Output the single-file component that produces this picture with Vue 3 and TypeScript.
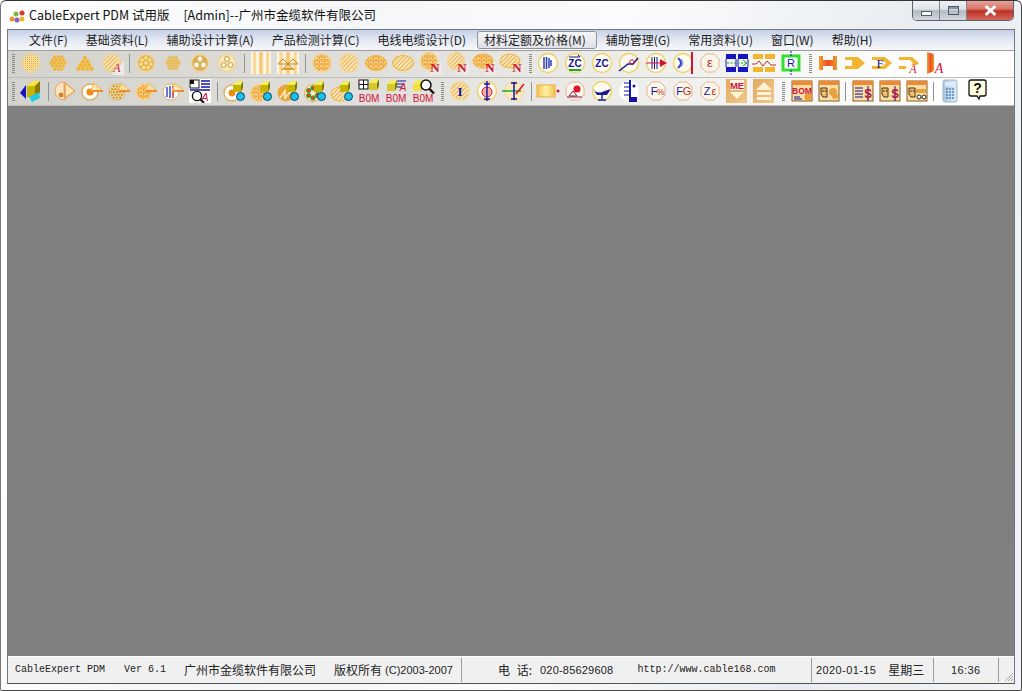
<script setup lang="ts">
const menus = ['文件(F)', '基础资料(L)', '辅助设计计算(A)', '产品检测计算(C)', '电线电缆设计(D)', '材料定额及价格(M)', '辅助管理(G)', '常用资料(U)', '窗口(W)', '帮助(H)']
const activeMenu = '材料定额及价格(M)'

const GOLD = '#f4b52e'
const EDGE = '#f2d592'
const RED = '#d3123c'
const BLUE = '#14149c'

const text = (x: number, y: number, s: string, size = 10, fill = BLUE, extra = '') =>
  `<text x="${x}" y="${y}" font-size="${size}" fill="${fill}" font-family="Liberation Sans, sans-serif" text-anchor="middle" ${extra}>${s}</text>`
const serifA = (x = 17, y = 21, size = 12) => text(x, y, 'A', size, RED, 'font-style="italic" style="font-family:Liberation Serif,serif"')
const letterN = (x = 17, y = 21) => text(x, y, 'N', 13, RED, 'font-weight="700" style="font-family:Liberation Serif,serif"')
const disc = (fill: string, r = 9, cx = 12, cy = 12) => `<circle cx="${cx}" cy="${cy}" r="${r}" fill="${fill}" stroke="${EDGE}" stroke-width="1.5"/>`
const oval = (fill: string, cx = 12, cy = 12, rx = 10.5, ry = 7.5) => `<ellipse cx="${cx}" cy="${cy}" rx="${rx}" ry="${ry}" fill="${fill}" stroke="${GOLD}" stroke-width="1"/>`
const wedge = `<polygon points="11,24 24,24 24,10" fill="#ecebe6"/>`

function cluster(cx: number, cy: number, r: number, step: number, dot: number, fill = GOLD) {
  let out = ''
  for (let row = -4; row <= 4; row++) {
    for (let col = -4; col <= 4; col++) {
      const x = (col + (row % 2 ? 0.5 : 0)) * step
      const y = row * step * 0.87
      if (x * x + y * y <= r * r) out += `<circle cx="${cx + x}" cy="${cy + y}" r="${dot}" fill="${fill}"/>`
    }
  }
  return out
}

function ringDots(n: number, cx: number, cy: number, r: number, dot: number, fill: string, stroke = 'none') {
  let out = ''
  for (let i = 0; i < n; i++) {
    const a = (i / n) * Math.PI * 2 - Math.PI / 2
    out += `<circle cx="${cx + r * Math.cos(a)}" cy="${cy + r * Math.sin(a)}" r="${dot}" fill="${fill}" stroke="${stroke}"/>`
  }
  return out
}

const pile = () => {
  let out = ''
  for (let row = 0; row < 4; row++) {
    for (let i = 0; i <= row; i++) out += `<circle cx="${12 + (i - row / 2) * 4.4}" cy="${7 + row * 3.6}" r="2.1" fill="${GOLD}"/>`
  }
  return out
}

const yellowRing = (inner: string) => `<circle cx="12" cy="12" r="9.5" fill="#fdfbf0" stroke="#eed264" stroke-width="1.4"/>${inner}`
const brownRing = (inner: string) => `<polygon points="8,3 16,3 21,8 21,16 16,21 8,21 3,16 3,8" fill="#fdf6ea" stroke="#e6b48c"/>${inner}`
const triangle = (inner: string) => `${inner}<polygon points="11,12 23,12 14,4" fill="#fbe6b4" fill-opacity=".75" stroke="${GOLD}"/><line x1="12" y1="12" x2="23" y2="12" stroke="#ec7a1c" stroke-width="1.4"/>`
const box3d = (x = 11, y = 2, c = '#c8b400') => `<polygon points="${x},${y + 4} ${x + 4},${y} ${x + 10},${y} ${x + 8},${y + 4}" fill="#f4ec60"/><rect x="${x}" y="${y + 4}" width="8" height="7" fill="${c}"/><polygon points="${x + 8},${y + 4} ${x + 10},${y} ${x + 10},${y + 7} ${x + 8},${y + 11}" fill="#7c7a08"/>`
const cyan = `<circle cx="18.5" cy="17.5" r="4" fill="#18c4e4" stroke="#0c3c80"/>`
const bomText = text(12, 23, 'B0M', 10, RED)
const doc = (inner: string) => `<rect x="3" y="2" width="20" height="20" fill="#f6dfa8" stroke="#8c5a1c"/><rect x="3" y="2" width="20" height="4" fill="#ee8a34"/>${inner}`
const face = `<path d="M5 9h6v9H7l-2-3z" fill="#f4c070" stroke="#4c2c0c"/><circle cx="7" cy="12" r=".8" fill="#222"/><circle cx="9.5" cy="12" r=".8" fill="#222"/>`
const dollar = `<line x1="18" y1="7" x2="18" y2="22" stroke="${BLUE}"/>${text(18, 19, '$', 13, '#b0183c', 'font-weight="700"')}`
const orangeLink = `<path d="M2 6h13l7 6-7 6H2v-3h11l3-3-3-3H2z" fill="${GOLD}"/>`

const icons: Record<string, string> = {
  fine: disc('url(#fine)', 8.5),
  flower: cluster(12, 12, 7.5, 3.5, 1.7),
  pile: pile(),
  fineA: disc('url(#diag)', 8.5) + wedge + serifA(),
  ring7: disc('#e3b550', 8.5) + ringDots(7, 12, 12, 5, 1.7, '#fbe09c') + `<circle cx="12" cy="12" r="1.7" fill="#fbe09c"/>`,
  small: cluster(12, 12, 6.5, 3.1, 1.5, '#ebb84c'),
  three: disc('#d9ae58', 8.5) + ringDots(3, 12, 12, 4, 2.4, '#fdf4dc'),
  threeO: disc('#fbe9bd', 8.5) + ringDots(3, 12, 12, 4, 2.5, '#fff6de', '#c79a3c'),
  bands: `<rect x="2" y="1" width="20" height="22" fill="url(#bands)"/>`,
  bandsT: `<rect x="1" y="1" width="22" height="22" fill="url(#bands)"/><path d="M2 13l5-5 5 5zM12 13l5-5 5 5zM5 18h14" fill="none" stroke="#c98a1c"/><path d="M12 13l-5 5h10z" fill="none" stroke="#c98a1c"/>`,
  net: disc('url(#net)', 9),
  diag: disc('url(#diag)', 9),
  ovalNet: oval('url(#net)'),
  ovalDiag: oval('url(#diag)'),
  netN: disc('url(#net)', 8.5, 11, 10) + wedge + letterN(),
  diagN: disc('url(#diag)', 8.5, 11, 10) + wedge + letterN(),
  ovalNetN: oval('url(#net)', 11, 10, 10, 7) + wedge + letterN(18),
  ovalDiagN: oval('url(#diag)', 11, 10, 10, 7) + wedge + letterN(18),
  bars: yellowRing(`<path d="M8 6v12M10.5 6v12M13 7v10M15 9v6" stroke="#2a3cc0" stroke-width="1.5"/>`),
  zcArc: yellowRing(`${text(12, 16, 'ZC', 10, BLUE, 'font-weight="700"')}<path d="M6 6h11l-2-2" fill="none" stroke="${BLUE}"/><path d="M6 19h12" stroke="#1ca832" stroke-width="2"/>`),
  zc: yellowRing(text(12, 16, 'ZC', 10, BLUE, 'font-weight="700"')),
  slope: yellowRing(`<path d="M2 20l9-7h5l5-6" fill="none" stroke="${BLUE}" stroke-width="1.5"/><circle cx="15" cy="11" r="2.3" fill="none" stroke="${RED}"/>`),
  ticks: yellowRing(`<path d="M8 6v12M10.5 6v12M13 6v12" stroke="${BLUE}"/><path d="M2 12h17" stroke="${RED}"/><polygon points="16,8 23,12 16,16" fill="${RED}"/>`),
  barRed: yellowRing(`<path d="M7 7q6 5 0 10" fill="none" stroke="#2a3cc0" stroke-width="2"/><path d="M10 8q4 4 0 8" fill="none" stroke="#7c8ce0"/><path d="M21 1v22" stroke="${RED}" stroke-width="2"/>`),
  epsilon: brownRing(text(12, 16, 'ε', 13, '#b8281c')),
  blocks: `<rect x="1" y="3" width="10" height="5" fill="#1414c0"/><rect x="13" y="3" width="10" height="5" fill="#1414c0"/><rect x="1" y="16" width="10" height="5" fill="#1414c0"/><rect x="13" y="16" width="10" height="5" fill="#1414c0"/><path d="M1 8v8M11 8v8M13 8v8M23 8v8" stroke="#1414c0"/><path d="M2 12h19" stroke="#1ca832" stroke-dasharray="2 1.5"/><path d="M18 9l4 3-4 3" fill="none" stroke="#1ca832"/>`,
  zigzag: `<rect x="1" y="3" width="10" height="5" fill="${GOLD}"/><rect x="13" y="3" width="10" height="5" fill="${GOLD}"/><rect x="1" y="16" width="10" height="5" fill="${GOLD}"/><rect x="13" y="16" width="10" height="5" fill="${GOLD}"/><path d="M0 13h4l3-3 4 5 4-5 4 4h5" fill="none" stroke="#c8281c"/>`,
  resistor: `<rect x="4" y="5" width="16" height="14" fill="#fff" stroke="#30e030" stroke-width="3"/><path d="M12 0v5M12 19v5" stroke="${BLUE}" stroke-dasharray="2 1"/>${text(12, 16, 'R', 11, BLUE)}`,
  hbeam: `<path d="M3 5h4v4h10V5h4v14h-4v-4H7v4H3z" fill="url(#heat)"/>`,
  link: orangeLink + `<polygon points="9,9 15,9 18,12 15,15 9,15" fill="${GOLD}"/>`,
  linkF: orangeLink + text(10, 17, 'F', 13, '#28146c', 'style="font-family:Liberation Serif,serif"'),
  linkA: orangeLink + `<rect x="9" y="14" width="14" height="9" fill="#fffef8"/>` + serifA(16, 22),
  stripA: `<path d="M3 1l7 2v17l-7 3z" fill="url(#heat)"/>` + serifA(15, 22, 14),

  cube: `<polygon points="8,7 14,2 21,2 15,7" fill="#ffe23c"/><rect x="8" y="7" width="8" height="11" fill="#c8b400"/><polygon points="16,7 21,2 21,14 16,18" fill="#8a7a00"/><polygon points="10,18 20,13 21,19 13,23" fill="#20c8e0"/><polygon points="1,14 7,6 7,20" fill="#1414c0"/>`,
  halfT: `<path d="M11 3a9 9 0 0 0 0 18z" fill="#fbe3c0" stroke="#e8a86c"/><circle cx="8" cy="16" r="2.4" fill="#c8862c"/><polygon points="12,4 22,12 12,19" fill="#fbe6b4" stroke="#e8872c"/><path d="M12 2v20" stroke="#e8a86c"/>`,
  pieT: triangle(`<circle cx="10" cy="13" r="8" fill="#fff" stroke="#ddb060" stroke-width="1.5"/><circle cx="10" cy="13" r="3.6" fill="#f28a14"/>`),
  dotsT: triangle(`<circle cx="10" cy="13" r="8" fill="#fbe9bd" stroke="#ddb060"/>${cluster(10, 13, 6.5, 3.2, 1.3, '#cf9a3c')}`),
  netT: triangle(disc('url(#net)', 8, 10, 13)),
  barsT: triangle(`<circle cx="10" cy="13" r="8" fill="#fff" stroke="#ddb060"/><path d="M6 8v10M9 7v12" stroke="#2a3cc0" stroke-width="1.4"/><path d="M12 7v12" stroke="${RED}" stroke-width="1.4"/>`),
  report: `<rect x="1" y="0" width="22" height="24" fill="#fff"/><rect x="2" y="1" width="9" height="8" fill="#fff" stroke="#111"/><rect x="2" y="1" width="4" height="4" fill="#111"/><path d="M13 2h9M13 5h9M13 8h9M2 11h20" stroke="${BLUE}" stroke-width="1.4"/><circle cx="9" cy="17" r="4.6" fill="none" stroke="#111" stroke-width="1.4"/>${text(17, 22, 'A', 11, RED, 'font-style="italic"')}<path d="M12 20l4 4" stroke="#111" stroke-width="2"/>`,
  pieBox: `<circle cx="10" cy="14" r="8" fill="#fff" stroke="#ddb060" stroke-width="1.5"/><circle cx="10" cy="14" r="3.4" fill="#f28a14"/>` + box3d() + cyan,
  netBox: disc('url(#net)', 8.5, 10, 14) + box3d() + cyan,
  slashBox: `<circle cx="10" cy="14" r="8.5" fill="#eba63a"/><path d="M4 19l5-7v7l6-7" fill="none" stroke="#fff3c8" stroke-width="1.4"/>` + box3d() + cyan,
  colorBox: `<circle cx="10" cy="14" r="8.5" fill="#fbe9bd" stroke="#ddb060"/>` + ringDots(6, 10, 14, 5, 2.1, '#ec3c1c', '#18a030') + box3d() + cyan,
  ovalBox: oval('url(#diag)', 10, 15, 9, 7) + box3d(10) + cyan,
  bomA: `<rect x="2" y="1" width="9" height="9" fill="#fff" stroke="#111"/><path d="M6.5 1v9M2 5.5h9" stroke="#111"/>` + box3d(12, 0, '#d8c82c') + bomText,
  bomB: box3d(3, 1, '#d8c82c') + `<path d="M13 2h9M13 5h7M13 8h5" stroke="${BLUE}"/>` + text(19, 12, 'A', 10, RED, 'font-style="italic"') + bomText,
  bomC: box3d(2, 1, '#f0e040') + `<circle cx="15" cy="6" r="5" fill="#fff" stroke="#111" stroke-width="1.5"/><path d="M18.5 10l4.5 4.5" stroke="#111" stroke-width="2.4"/>` + bomText,
  iNet: disc('url(#diag)', 9) + text(12, 16.5, 'I', 13, BLUE, 'font-weight="700" style="font-family:Liberation Serif,serif"'),
  iRed: yellowRing(`<circle cx="12" cy="13" r="5" fill="#f8b0a0" stroke="${RED}"/><path d="M12 2v20M9 5h6M9 20h6" stroke="${BLUE}" stroke-width="1.4"/>`),
  iGreen: `<circle cx="12" cy="12" r="9.5" fill="#fbe9bd" stroke="${EDGE}"/><path d="M0 12h19" stroke="#1ca832" stroke-width="1.4"/><path d="M12 3v18M9 4h6M9 20h6" stroke="${BLUE}" stroke-width="1.5"/><path d="M14 15l8-10" stroke="${RED}" stroke-width="1.5"/>`,
  lamp: `<rect x="1" y="6" width="18" height="12" fill="url(#lamp)" stroke="#e8b040"/><circle cx="22" cy="12" r="1.5" fill="${RED}"/>`,
  redDot: brownRing(`<circle cx="14" cy="10" r="3.5" fill="#e0142c"/><path d="M6 17l4-5 4 5z" fill="none" stroke="#8c1c4c"/><path d="M4 18h15" stroke="#8c1c4c"/>`),
  scale: yellowRing(`<path d="M3 10q4 5 9 3t9-3l-4 6H7z" fill="#1a1a8c"/><path d="M12 14v6M8 21h8" stroke="${BLUE}" stroke-width="1.4"/>`),
  blueTicks: `<circle cx="12" cy="12" r="10" fill="#fff"/><path d="M13 1v22" stroke="#1414a8" stroke-width="2"/><path d="M7 4h5M7 8h5M7 12h5M7 16h5" stroke="#1414a8"/><rect x="13" y="18" width="7" height="5" fill="#1414a8"/><circle cx="17" cy="7" r="1.5" fill="#1414a8"/>`,
  fPct: brownRing(text(10, 16, 'F', 11, BLUE) + text(16.5, 16, '%', 9, '#b8281c')),
  fg: brownRing(text(8.5, 16, 'F', 11, BLUE) + text(16, 16, 'G', 11, '#b8281c')),
  ze: brownRing(text(9, 16, 'Z', 11, BLUE) + text(16, 16, 'ε', 11, '#b8281c')),
  me: `<rect x="1" y="0" width="21" height="24" fill="url(#tile)"/>` + `<rect x="5" y="1" width="14" height="10" fill="#fff6e4"/>` + text(12, 10, 'ME', 9.5, RED, 'font-weight="700"') + `<polygon points="5,13 19,13 12,20" fill="#fff3d4"/>`,
  up: `<rect x="1" y="0" width="21" height="24" fill="url(#tile)"/><polygon points="12,3 20,11 4,11" fill="#fff3d4"/><rect x="5" y="13" width="14" height="3" fill="#fff3d4"/><rect x="5" y="18" width="14" height="3" fill="#fff3d4"/>`,
  bomDoc: doc(text(13, 15, 'BOM', 8.5, RED, 'font-weight="700"') + `<path d="M5 18h6M5 20h8" stroke="${BLUE}"/><circle cx="19" cy="18" r="3.5" fill="#ec9a34"/>`),
  faceDoc: doc(face + `<circle cx="17" cy="13" r="4" fill="#e8a040"/><circle cx="19" cy="17" r="3" fill="#e8a040"/>`),
  dollarDoc: doc(`<path d="M5 9h8M5 12h8M5 15h8M5 18h8" stroke="${BLUE}"/>` + dollar),
  faceDollar: doc(face + dollar),
  faceDots: doc(face + `<rect x="12" y="10" width="10" height="4" fill="#e8a040"/><circle cx="15" cy="18" r="2" fill="#fff" stroke="#222"/><circle cx="20" cy="18" r="2" fill="#fff" stroke="#222"/>`),
  calc: `<rect x="5" y="1" width="14" height="22" rx="2" fill="url(#calc)" stroke="#9cb4cc"/><rect x="7" y="3" width="10" height="4" fill="#dcecf8"/><path d="M8 10h8M8 13h8M8 16h8M8 19h8" stroke="#4c84bc" stroke-width="1.4" stroke-dasharray="2 1"/>`,
  help: `<path d="M6 1h13a2 2 0 0 1 2 2v12a2 2 0 0 1-2 2h-4l-1 3-2-3H6a2 2 0 0 1-2-2V3a2 2 0 0 1 2-2z" fill="#fffce0" stroke="#111" stroke-width="1.3"/>` + text(12.5, 14, '?', 14, '#111', 'font-weight="700"'),
}

const rowOne = 'grip fine flower pile fineA sep ring7 small three threeO sep bands bandsT sep net diag ovalNet ovalDiag netN diagN ovalNetN ovalDiagN grip bars zcArc zc slope ticks barRed epsilon blocks zigzag resistor grip hbeam link linkF linkA stripA'.split(' ')
const rowTwo = 'grip cube sep halfT pieT dotsT netT barsT report sep pieBox netBox slashBox colorBox ovalBox bomA bomB bomC grip iNet iRed iGreen sep lamp redDot scale blueTicks fPct fg ze me up grip bomDoc faceDoc sep dollarDoc faceDollar faceDots sep calc help'.split(' ')
const toolbars = [rowOne, rowTwo]
</script>

<template>
  <div class="window">
    <svg class="defs" width="0" height="0" aria-hidden="true">
      <defs>
        <pattern id="fine" width="2" height="2" patternUnits="userSpaceOnUse">
          <rect width="2" height="2" fill="#fbe0a0" />
          <rect width="1" height="1" fill="#e8a838" />
        </pattern>
        <pattern id="diag" width="3" height="3" patternUnits="userSpaceOnUse" patternTransform="rotate(-45)">
          <rect width="3" height="3" fill="#fdeecb" />
          <rect width="3" height="1.3" fill="#e9b050" />
        </pattern>
        <pattern id="net" width="5" height="4" patternUnits="userSpaceOnUse">
          <rect width="5" height="4" fill="#fbd98c" />
          <path d="M0 0h5M2 0v2M4.5 2v2M0 2h5" stroke="#e9962c" stroke-width=".9" />
        </pattern>
        <linearGradient id="bands">
          <stop offset="0" stop-color="#fff" />
          <stop offset=".2" stop-color="#f8cf80" />
          <stop offset=".32" stop-color="#fff" />
          <stop offset=".5" stop-color="#f5bd5c" />
          <stop offset=".68" stop-color="#fff" />
          <stop offset=".82" stop-color="#f8cf80" />
          <stop offset="1" stop-color="#fff" />
        </linearGradient>
        <linearGradient id="heat">
          <stop offset="0" stop-color="#f4a030" />
          <stop offset=".5" stop-color="#ee4c24" />
          <stop offset="1" stop-color="#f09a2c" />
        </linearGradient>
        <linearGradient id="lamp">
          <stop offset="0" stop-color="#f6c048" />
          <stop offset=".5" stop-color="#fff2a8" />
          <stop offset="1" stop-color="#f6c048" />
        </linearGradient>
        <linearGradient id="tile" x2="1" y2="1">
          <stop offset="0" stop-color="#e2a860" />
          <stop offset="1" stop-color="#f0c98c" />
        </linearGradient>
        <linearGradient id="calc">
          <stop offset="0" stop-color="#a8c4dc" />
          <stop offset="1" stop-color="#e4eef6" />
        </linearGradient>
      </defs>
    </svg>

    <header class="title-bar">
      <svg class="app-icon" viewBox="0 0 16 14" width="16" height="14">
        <circle cx="3" cy="10" r="2.5" fill="#e8962c" />
        <circle cx="7" cy="5" r="2.5" fill="#7cb83c" />
        <circle cx="8" cy="11" r="2.5" fill="#8c5cc0" />
        <circle cx="13" cy="4" r="2.5" fill="#e0342c" />
        <circle cx="13" cy="10" r="2.5" fill="#e8b82c" />
      </svg>
      <span class="title-text">CableExpert PDM 试用版</span>
      <span class="title-text title-user">[Admin]--广州市金缆软件有限公司</span>
      <div class="caption">
        <div class="cap-btn cap-min"><i class="glyph-min"></i></div>
        <div class="cap-btn cap-max"><i class="glyph-max"></i></div>
        <div class="cap-btn cap-close">
          <svg viewBox="0 0 12 10" width="13" height="11">
            <path d="M1.5 1l9 8M10.5 1l-9 8" stroke="#fff" stroke-width="2.6" />
          </svg>
        </div>
      </div>
    </header>

    <div class="client">
      <nav class="menu-bar">
        <span v-for="m in menus" :key="m" class="menu-item" :class="{ active: m === activeMenu }">{{ m }}</span>
      </nav>

      <div v-for="(row, r) in toolbars" :key="r" class="toolbar">
        <template v-for="(item, i) in row" :key="i">
          <div v-if="item === 'grip'" class="grip"></div>
          <div v-else-if="item === 'sep'" class="sep"></div>
          <div v-else class="tool">
            <svg viewBox="0 0 24 24" width="24" height="24" v-html="icons[item]"></svg>
          </div>
        </template>
      </div>

      <main class="mdi"></main>

      <footer class="status-bar">
        <div class="panel panel-info">
          <span class="mono">CableExpert PDM</span>
          <span class="mono gap-19">Ver 6.1</span>
          <span class="gap-18">广州市金缆软件有限公司</span>
          <span class="gap-18">版权所有</span>
          <span class="ascii copyright">(C)2003-2007</span>
        </div>
        <div class="panel panel-contact">
          <span class="phone-label">电 话:</span>
          <span class="ascii num">020-85629608</span>
          <span class="mono gap-24">http://www.cable168.com</span>
        </div>
        <div class="panel panel-date">
          <span class="ascii date">2020-01-15</span>
          <span class="gap-12">星期三</span>
        </div>
        <div class="panel panel-time"><span class="ascii date">16:36</span></div>
        <div class="panel panel-grip">
          <svg viewBox="0 0 12 12" width="12" height="12">
            <path d="M11 3l-8 8M11 6l-5 5M11 9l-2 2" stroke="#a8a8a8" stroke-width="1" />
          </svg>
        </div>
      </footer>
    </div>
  </div>
</template>

<style scoped>
.window {
  position: relative;
  box-sizing: border-box;
  width: 1022px;
  height: 691px;
  display: flex;
  flex-direction: column;
  padding: 0 6px 6px;
  border: 1px solid #4a4a4a;
  border-top-color: #333;
  border-left-color: #777;
  border-radius: 6px 6px 2px 2px;
  background: linear-gradient(100deg, #fff 0%, #f4f6f8 30%, #fafbfc 55%, #e9edf1 80%, #f2f4f6 100%);
  font-family: "Noto Sans CJK SC", "Noto Sans", sans-serif;
  font-size: 12px;
  color: #1a1a1a;
  overflow: hidden;
}

.defs {
  position: absolute;
}

.title-bar {
  height: 28px;
  display: flex;
  align-items: center;
  flex: none;
}

.app-icon {
  margin-left: 2px;
  margin-top: 2px;
}

.title-text {
  margin-left: 4px;
  font-size: 12.5px;
  line-height: 28px;
  color: #111;
}

.title-user {
  margin-left: 14px;
}

.caption {
  align-self: flex-start;
  margin-left: auto;
  margin-right: 1px;
  margin-top: -1px;
  display: flex;
  height: 20px;
  border: 1px solid #5a6270;
  border-top: none;
  border-radius: 0 0 5px 5px;
  overflow: hidden;
}

.cap-btn {
  box-sizing: border-box;
  display: flex;
  align-items: center;
  justify-content: center;
}

.cap-min,
.cap-max {
  width: 27px;
  border-right: 1px solid #7a828c;
  background: linear-gradient(#f2f4f6 0%, #dfe3e8 45%, #b4bac2 55%, #d4d9df 100%);
}

.glyph-min {
  width: 9px;
  height: 3px;
  margin-top: 6px;
  border: 1px solid #4f5a68;
  background: #fff;
}

.glyph-max {
  width: 9px;
  height: 7px;
  border: 1px solid #4f5a68;
  box-shadow: inset 0 2px 0 #8a929c;
}

.cap-close {
  width: 46px;
  background: linear-gradient(#e8a8a0 0%, #d87468 45%, #bc3026 55%, #d4685c 100%);
}

.client {
  flex: 1;
  min-height: 0;
  display: flex;
  flex-direction: column;
  border: 1px solid #6f7780;
  border-bottom-color: #555;
}

.menu-bar {
  height: 21px;
  box-sizing: border-box;
  flex: none;
  display: flex;
  align-items: flex-start;
  gap: 2px;
  padding: 1px 0 0 14px;
  background: linear-gradient(#c5d1e6 0%, #e3e8f2 50%, #f6f7fa 100%);
  border-bottom: 1px solid #9e9e9e;
}

.menu-item {
  height: 18px;
  line-height: 15px;
  padding: 0 8px 0 6px;
  box-sizing: border-box;
  border: 1px solid transparent;
  white-space: nowrap;
  color: #222;
}

.menu-item.active {
  padding-right: 10px;
  border: 1px solid #8f949a;
  border-radius: 3px;
  background: linear-gradient(#f4f5f8, #dfe2e8);
}

.toolbar {
  height: 27px;
  box-sizing: border-box;
  flex: none;
  display: flex;
  align-items: center;
  padding-bottom: 2px;
  background: linear-gradient(90deg, #d4d2cc 0%, #e2e1dd 40%, #f0f0ee 68%, #fff 92%);
  border-bottom: 1px solid #bcbcb8;
}

.toolbar + .toolbar {
  height: 28px;
  padding-bottom: 1px;
}

.grip {
  width: 10px;
  height: 19px;
  flex: none;
  background:
    repeating-linear-gradient(#8a8a88 0 1px, transparent 1px 2px) 4px 0 / 3px 100% no-repeat;
}

.sep {
  width: 7px;
  height: 19px;
  flex: none;
  background: linear-gradient(#8f9398, #8f9398) 3px 0 / 1px 100% no-repeat;
}

.tool {
  width: 27px;
  height: 24px;
  flex: none;
  padding: 0 2px 0 1px;
  box-sizing: border-box;
}

.tool svg {
  display: block;
}

.mdi {
  flex: 1;
  min-height: 0;
  background: #808080;
}

.status-bar {
  height: 27px;
  flex: none;
  display: flex;
  gap: 2px;
  padding-top: 1px;
  box-sizing: border-box;
  background: #f0f0f0;
  border-top: 1px solid #fff;
  font-size: 12px;
  line-height: 24px;
  color: #222;
}

.panel {
  box-sizing: border-box;
  height: 24px;
  display: flex;
  align-items: center;
  border-right: 1px solid #9c9c9c;
  white-space: nowrap;
}

.panel-info {
  width: 454px;
  padding-left: 7px;
}

.panel-contact {
  width: 348px;
  padding-left: 34px;
}

.panel-date {
  width: 120px;
  padding-left: 2px;
}

.panel-time {
  width: 63px;
  padding-left: 15px;
}

.panel-grip {
  flex: 1;
  border-right: none;
  align-items: flex-end;
  justify-content: flex-end;
}

.mono {
  font-family: "Liberation Mono", monospace;
  font-size: 10px;
}

.ascii {
  font-family: "Liberation Sans", sans-serif;
  font-size: 11px;
}

.date {
  letter-spacing: 0.4px;
}

.copyright {
  margin-left: 3px;
}

.phone-label {
  word-spacing: 4px;
}

.num {
  margin-left: 8px;
  letter-spacing: 0.2px;
}

.gap-18 {
  margin-left: 18px;
}

.gap-19 {
  margin-left: 19px;
}

.gap-24 {
  margin-left: 24px;
}

.gap-12 {
  margin-left: 12px;
}
</style>

<style>
html,
body {
  margin: 0;
  background: #fff;
  overflow: hidden;
}
</style>
